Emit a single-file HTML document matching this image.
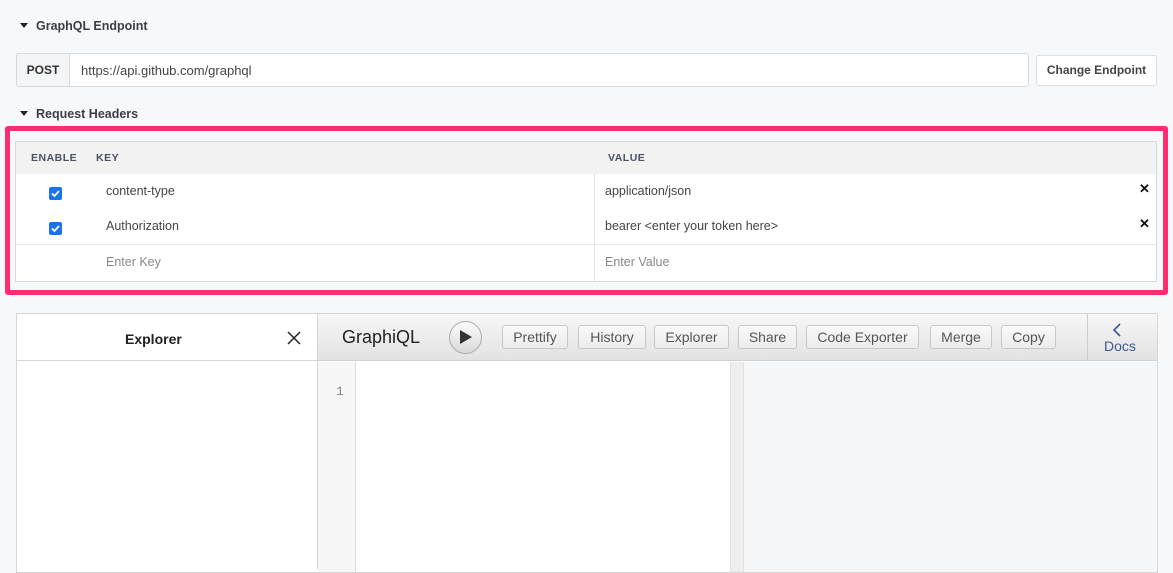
<!DOCTYPE html>
<html><head><style>
*{box-sizing:border-box;margin:0;padding:0}
body{width:1173px;height:569px;overflow:hidden;background:#f7f8fa;font-family:"Liberation Sans",sans-serif;position:relative;color:#333}
.a{position:absolute}
.sec{font-size:12.5px;font-weight:bold;color:#3a3f47}
.tri{display:inline-block;width:0;height:0;border-left:4px solid transparent;border-right:4px solid transparent;border-top:5px solid #222;margin-right:8px;vertical-align:2px}
.th{font-size:10.5px;font-weight:bold;color:#4a5260;letter-spacing:.5px}
.td{font-size:12.5px;color:#444}
.cb{width:13px;height:13px;background:#1a73e8;border-radius:2px}
.btn{position:absolute;top:325px;height:24px;border:1px solid #c8c8c8;border-radius:3px;background:linear-gradient(#f9f9f9,#ececec);font-size:14px;color:#555;text-align:center;line-height:22px}
.x{font-size:13px;font-weight:bold;color:#111}
</style></head><body>
<div class="a sec" style="left:20px;top:19px"><span class="tri"></span>GraphQL Endpoint</div>
<div class="a" style="left:16px;top:53px;width:1013px;height:34px;border:1px solid #d6d9de;border-radius:3px;background:#fff"></div>
<div class="a" style="left:16px;top:53px;width:54px;height:34px;border:1px solid #d6d9de;border-radius:3px 0 0 3px;background:#f4f5f7;font-size:12px;font-weight:bold;color:#333;line-height:32px;text-align:center">POST</div>
<div class="a td" style="left:81px;top:63px;font-size:13px">https://api.github.com/graphql</div>
<div class="a" style="left:1036px;top:55px;width:121px;height:31px;border:1px solid #dcdfe3;border-radius:3px;background:#fff;font-size:12px;font-weight:bold;color:#444;text-align:center;line-height:29px">Change Endpoint</div>
<div class="a sec" style="left:20px;top:107px"><span class="tri"></span>Request Headers</div>
<div class="a" style="left:5px;top:126px;width:1163px;height:169px;border:5px solid #ff2d6f;border-radius:3px"></div>
<div class="a" style="left:15px;top:141px;width:1142px;height:141px;border:1px solid #d6d9de;background:#fff"></div>
<div class="a" style="left:16px;top:142px;width:1140px;height:32px;background:#f2f2f2"></div>
<div class="a th" style="left:31px;top:152px">ENABLE</div>
<div class="a th" style="left:96px;top:152px">KEY</div>
<div class="a th" style="left:608px;top:152px">VALUE</div>
<div class="a" style="left:594px;top:174px;width:1px;height:107px;background:#e2e4e8"></div>
<div class="a" style="left:16px;top:244px;width:1076px;height:1px;background:#e2e4e8"></div>
<div class="a" style="left:594px;top:244px;width:562px;height:1px;background:#e2e4e8"></div>
<div class="a cb" style="left:49px;top:187px"><svg width="13" height="13"><path d="M3 6.5l2.5 2.5 4.5-5" stroke="#fff" stroke-width="1.8" fill="none"/></svg></div>
<div class="a cb" style="left:49px;top:222px"><svg width="13" height="13"><path d="M3 6.5l2.5 2.5 4.5-5" stroke="#fff" stroke-width="1.8" fill="none"/></svg></div>
<div class="a td" style="left:106px;top:184px">content-type</div>
<div class="a td" style="left:106px;top:219px">Authorization</div>
<div class="a td" style="left:106px;top:255px;color:#888">Enter Key</div>
<div class="a td" style="left:605px;top:184px">application/json</div>
<div class="a td" style="left:605px;top:219px">bearer &lt;enter your token here&gt;</div>
<div class="a td" style="left:605px;top:255px;color:#888">Enter Value</div>
<div class="a x" style="left:1139px;top:181px">✕</div>
<div class="a x" style="left:1139px;top:216px">✕</div>

<div class="a" style="left:16px;top:313px;width:1142px;height:260px;border:1px solid #d6d6d6;background:#fff"></div>
<div class="a" style="left:17px;top:314px;width:300px;height:47px;border-bottom:1px solid #d6d6d6;background:#fff"></div>
<div class="a" style="left:125px;top:331px;font-size:14px;font-weight:bold;color:#222">Explorer</div>
<svg class="a" style="left:287px;top:331px" width="14" height="14"><path d="M1 1L13 13M13 1L1 13" stroke="#222" stroke-width="1.5"/></svg>
<div class="a" style="left:317px;top:314px;width:1px;height:255px;background:#d6d6d6"></div>
<div class="a" style="left:318px;top:314px;width:839px;height:47px;background:linear-gradient(#f7f7f7,#e2e2e2);border-bottom:1px solid #d0d0d0"></div>
<div class="a" style="left:342px;top:327px;font-size:18px;color:#222">GraphiQL</div>
<div class="a" style="left:449px;top:321px;width:33px;height:33px;border-radius:50%;border:1px solid #aaa;background:linear-gradient(#fdfdfd,#d8d8d8)"></div>
<svg class="a" style="left:459px;top:329px" width="14" height="16"><path d="M1 1L13 8L1 15Z" fill="#333"/></svg>
<div class="btn" style="left:502px;width:66px">Prettify</div>
<div class="btn" style="left:578px;width:68px">History</div>
<div class="btn" style="left:654px;width:75px">Explorer</div>
<div class="btn" style="left:738px;width:59px">Share</div>
<div class="btn" style="left:806px;width:113px">Code Exporter</div>
<div class="btn" style="left:930px;width:62px">Merge</div>
<div class="btn" style="left:1001px;width:55px">Copy</div>
<div class="a" style="left:1087px;top:314px;width:1px;height:47px;background:#ccc"></div>
<svg class="a" style="left:1111px;top:322px" width="12" height="16"><path d="M9 2L3 8L9 14" stroke="#3b5998" stroke-width="1.6" fill="none"/></svg>
<div class="a" style="left:1104px;top:338px;font-size:14px;color:#3b5998">Docs</div>
<div class="a" style="left:318px;top:362px;width:38px;height:210px;background:#f7f7f7;border-right:1px solid #ddd"></div>
<div class="a" style="left:336px;top:384px;font-family:'Liberation Mono',monospace;font-size:13px;color:#888">1</div>
<div class="a" style="left:730px;top:362px;width:13px;height:210px;background:#eee;border-left:1px solid #e4e4e4"></div>
<div class="a" style="left:743px;top:362px;width:414px;height:210px;background:#f6f7f8;border-left:1px solid #e0e0e0"></div>
</body></html>
